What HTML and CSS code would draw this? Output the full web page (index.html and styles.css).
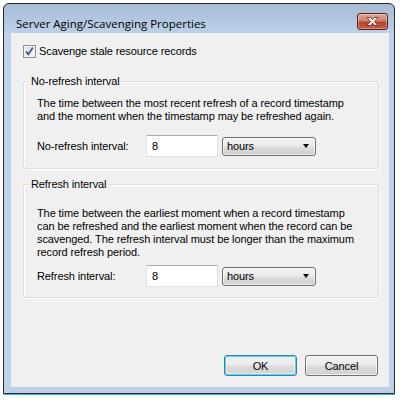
FILE: index.html
```html
<!DOCTYPE html>
<html>
<head>
<meta charset="utf-8">
<link rel="stylesheet" href="styles.css">
</head>
<body>
<div class="window">
  <div class="titlebar">
    <span class="title">Server Aging/Scavenging Properties</span>
    <div class="close">
      <svg width="15" height="11" viewBox="0 0 15 11">
        <path d="M2 1.5 L5.5 1.5 L7.5 3.8 L9.5 1.5 L13 1.5 L9.3 5.5 L13 9.5 L9.5 9.5 L7.5 7.2 L5.5 9.5 L2 9.5 L5.7 5.5 Z" fill="#fff" stroke="#5a2a22" stroke-width="0.8" stroke-linejoin="round"/>
      </svg>
    </div>
  </div>
  <div class="client">
    <label class="check-row">
      <span class="checkbox">
        <svg width="11" height="11" viewBox="0 0 11 11">
          <path d="M2.2 5.6 L4.3 8.4 L8.8 1.6" fill="none" stroke="#2b4f9c" stroke-width="1.7"/>
        </svg>
      </span>
      <span>Scavenge stale resource records</span>
    </label>

    <fieldset class="group g1">
      <legend>No-refresh interval</legend>
      <p class="desc d1">The time between the most recent refresh of a record timestamp<br>and the moment when the timestamp may be refreshed again.</p>
      <div class="field-row r1">
        <span class="field-label">No-refresh interval:</span>
        <span class="input">8</span>
        <span class="combo"><span>hours</span><span class="arrow"></span></span>
      </div>
    </fieldset>

    <fieldset class="group g2">
      <legend>Refresh interval</legend>
      <p class="desc d2">The time between the earliest moment when a record timestamp<br>can be refreshed and the earliest moment when the record can be<br>scavenged. The refresh interval must be longer than the maximum<br>record refresh period.</p>
      <div class="field-row r2">
        <span class="field-label">Refresh interval:</span>
        <span class="input">8</span>
        <span class="combo"><span>hours</span><span class="arrow"></span></span>
      </div>
    </fieldset>

    <div class="buttons">
      <span class="btn default">OK</span>
      <span class="btn">Cancel</span>
    </div>
  </div>
</div>
</body>
</html>
```

FILE: styles.css
```css
html, body {
  margin: 0;
  padding: 0;
  background: #ffffff;
}
body {
  width: 404px;
  height: 403px;
  overflow: hidden;
}
.window {
  margin: 3px 0 0 3px;
  border: 1px solid #2a2a2a;
  border-radius: 6px 6px 0 0;
  background: linear-gradient(#a7bbd4 0px, #b6cbe3 20px, #bcd2ea 30px, #bcd2ea 100%);
  box-shadow: 0 1px 0 #3fb8c8;
  display: flex;
  flex-direction: column;
  padding: 0 5px 6px 7px;
  box-sizing: border-box;
  width: 392px;
  height: 391px;
}
.titlebar {
  height: 29px;
  display: flex;
  align-items: flex-start;
  justify-content: space-between;
  flex: none;
}
.title {
  font-family: "Open Sans", sans-serif;
  font-size: 11.5px;
  color: #000;
  margin: 13px 0 0 5px;
  line-height: 14px;
}
.close {
  margin-top: 9px;
  margin-right: 1px;
  width: 29px;
  height: 15px;
  border: 1px solid #4e2119;
  border-radius: 3px;
  background: linear-gradient(#e0a596 0%, #d0806c 45%, #b9432a 55%, #c55a40 100%);
  box-shadow: inset 0 0 0 1px rgba(255,255,255,0.35);
  display: flex;
  align-items: center;
  justify-content: center;
}
.close svg { display: block; }
.client {
  flex: 1;
  background: #f0f0f0;
  font-family: "Liberation Sans", sans-serif;
  font-size: 11px;
  letter-spacing: -0.1px;
  color: #000;
  padding: 12px 0 0 12px;
  display: flex;
  flex-direction: column;
  align-items: flex-start;
}
.check-row {
  display: flex;
  align-items: center;
  height: 13px;
  line-height: 13px;
}
.checkbox {
  width: 11px;
  height: 11px;
  border: 1px solid #8e8f8f;
  background: linear-gradient(135deg, #dcdcdc, #f6f6f6);
  box-shadow: inset 0 0 0 1px #f4f4f4;
  margin-right: 3px;
  display: flex;
}
.checkbox svg { display: block; }
.group {
  margin: 0;
  padding: 0 0 10px 0;
  width: 356px;
  box-sizing: border-box;
  border: 1px solid #d5dfe5;
  border-radius: 3px;
  box-shadow: inset 1px 1px 0 #fff, 1px 1px 0 #fff;
  min-width: 0;
}
.group legend {
  padding: 0 2px;
  margin-left: 5px;
  line-height: 13px;
  height: 13px;
}
.g1 { margin-top: 17px; padding-bottom: 11px; }
.g2 { margin-top: 9px; }
.desc {
  margin: 0 0 0 13px;
  line-height: 13px;
}
.d1 { margin-top: 9px; }
.d2 { margin-top: 16px; }
.field-row {
  display: flex;
  align-items: center;
  margin-left: 13px;
  height: 22px;
}
.r1 { margin-top: 12px; }
.r2 { margin-top: 6px; }
.field-label {
  width: 109px;
  flex: none;
}
.input {
  height: 20px;
  border: 1px solid #e2e3ea;
  border-top-color: #abadb3;
  background: #fff;
  line-height: 20px;
  padding-left: 5px;
  box-sizing: content-box;
  width: 65px;
}
.combo {
  margin-left: 4px;
  width: 94px;
  height: 19px;
  border: 1px solid #707070;
  border-radius: 3px;
  background: linear-gradient(#f2f2f2 0%, #ebebeb 45%, #dddddd 55%, #cfcfcf 100%);
  box-shadow: inset 0 0 0 1px rgba(255,255,255,0.6);
  display: flex;
  align-items: center;
  justify-content: space-between;
  padding: 0 6px 0 4px;
  box-sizing: border-box;
}
.arrow {
  width: 0;
  height: 0;
  border-left: 3.5px solid transparent;
  border-right: 3.5px solid transparent;
  border-top: 4px solid #000;
}
.buttons {
  margin-top: 57px;
  margin-left: 201px;
  display: flex;
  gap: 8px;
}
.btn {
  width: 73px;
  height: 21px;
  box-sizing: border-box;
  border: 1px solid #707070;
  border-radius: 3px;
  background: linear-gradient(#f2f2f2 0%, #ebebeb 45%, #dddddd 55%, #cfcfcf 100%);
  box-shadow: inset 0 0 0 1px rgba(255,255,255,0.7);
  display: flex;
  align-items: center;
  justify-content: center;
}
.btn.default {
  border-color: #3c7fb1;
  box-shadow: inset 0 0 0 1px #48d8fb, inset 0 0 0 2px rgba(255,255,255,0.5);
}
```
